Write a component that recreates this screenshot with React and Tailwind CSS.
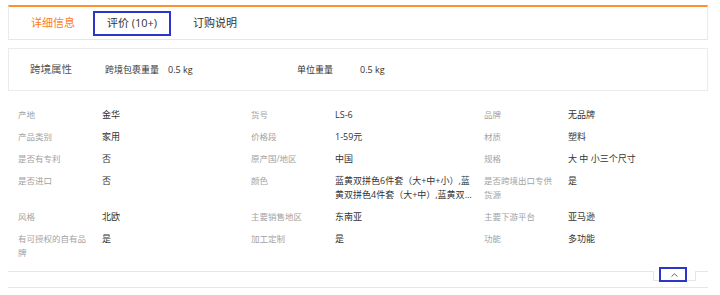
import React from 'react';

const attrs = [
  ['产地', '金华'],
  ['货号', 'LS-6'],
  ['品牌', '无品牌'],
  ['产品类别', '家用'],
  ['价格段', '1-59元'],
  ['材质', '塑料'],
  ['是否有专利', '否'],
  ['原产国/地区', '中国'],
  ['规格', '大 中 小三个尺寸'],
  ['是否进口', '否'],
  ['颜色', '蓝黄双拼色6件套（大+中+小）,蓝黄双拼色4件套（大+中）,蓝黄双拼色3件套（大+小）'],
  ['是否跨境出口专供货源', '是'],
  ['风格', '北欧'],
  ['主要销售地区', '东南亚'],
  ['主要下游平台', '亚马逊'],
  ['有可授权的自有品牌', '是'],
  ['加工定制', '是'],
  ['功能', '多功能'],
];

export default function App() {
  return (
    <div className="w-[720px] h-[295px] bg-white overflow-hidden font-['Open_Sans','Noto_Sans_CJK_SC',sans-serif]">
      <div className="ml-[8px] w-[700px] pt-[5px]">
        {/* tabs */}
        <div className="h-[35px] border-t-2 border-t-[#ff902e] border-x border-b border-x-[#ebebeb] border-b-[#e6e6e6] flex items-center text-[11px] text-[#333]">
          <div className="ml-[22px] text-[#ff7a1a]">详细信息</div>
          <div className="ml-[18px] w-[78px] h-[25px] border-2 border-[#2b35c9] flex items-center justify-center">评价 (10+)</div>
          <div className="ml-[22px]">订购说明</div>
        </div>

        {/* cross-border */}
        <div className="mt-[8px] h-[43px] border border-[#ebebeb] flex items-center text-[#333]">
          <div className="ml-[21px] w-[75px] text-[10.5px] text-[#555]">跨境属性</div>
          <div className="flex w-[192px] text-[9px]">
            <span className="w-[63px]">跨境包裹重量</span>
            <span>0.5 kg</span>
          </div>
          <div className="flex text-[9px]">
            <span className="w-[63px]">单位重量</span>
            <span>0.5 kg</span>
          </div>
        </div>

        {/* attributes */}
        <div className="mt-[17px] pl-[10px] grid grid-cols-[233px_233px_233px] gap-y-[8px] leading-[14px]">
          {attrs.map(([k, v], i) => (
            <div key={i} className="flex">
              <div className="w-[84px] pr-[10px] text-[8.5px] text-[#a3a3a3]">{k}</div>
              <div className="w-[142px] text-[9px] text-[#333] break-all line-clamp-2">{v}</div>
            </div>
          ))}
        </div>

        {/* footer toggle */}
        <div className="mt-[11px] flex h-[10px]">
          <div className="flex-1 border-t border-[#e6e6e6]" />
          <div className="relative w-[43px] h-[10px] border-x border-b border-[#e6e6e6] flex items-center justify-center">
            <svg width="7" height="4" viewBox="0 0 7 4" className="mb-[2px]">
              <path d="M0.5 3.5 L3.5 0.8 L6.5 3.5" fill="none" stroke="#666" strokeWidth="1" />
            </svg>
            <div className="absolute left-[5px] top-[-4px] w-[28px] h-[15px] border-2 border-[#2b35c9]" />
          </div>
          <div className="w-[12px] border-t border-[#e6e6e6]" />
        </div>
        <div className="mt-[6px] border-t border-[#e6e6e6]" />
      </div>
    </div>
  );
}
